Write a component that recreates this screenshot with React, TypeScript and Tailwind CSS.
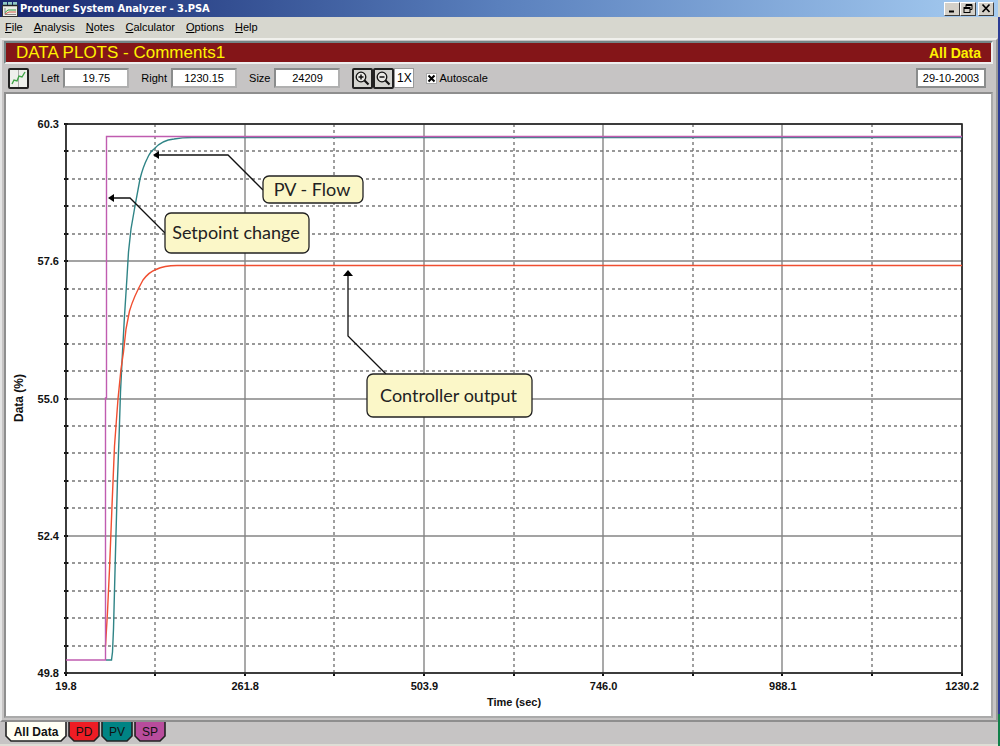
import type { ReactNode } from "react";

const PLOT = { left: 60, top: 30, width: 896, height: 549 };
const COLS = 10;
const ROWS = 20;

const menus = ["File", "Analysis", "Notes", "Calculator", "Options", "Help"];
const xLabels = ["19.8", "261.8", "503.9", "746.0", "988.1", "1230.2"];
const yLabels = ["60.3", "57.6", "55.0", "52.4", "49.8"];

const tabs = [
  { label: "All Data", fill: "#fffff4", className: "w-[62px] font-bold" },
  { label: "PD", fill: "#ee1c24", className: "w-8" },
  { label: "PV", fill: "#008484", className: "w-8" },
  { label: "SP", fill: "#b84c9c", className: "w-8" },
];

const curves = [
  {
    color: "#2f8486",
    d: "M40 536 H45.5 L46.5 528 L47.5 505 L49.5 428 L51.5 355 L53 315 L54.5 268 L56.5 228 L58.5 192 L61 153 L62.5 128 L65 105 L69 82 L74 55 Q77 43 81 35 Q84 28 88 25 Q96 16 108 15 Q116 13.5 126 13.5 H896",
  },
  {
    color: "#f04e30",
    d: "M39.5 522 L41.5 488 L43.5 445 L46 382 L48.5 322 L52 275 L55 245 L57.5 228 L60 205 L63.5 187 Q68 172 77 156 Q83 148 90 145.5 Q98 141.5 111 141.5 H896",
  },
  { color: "#c05cb0", d: "M0 536 H39.5 V274 H40.5 V12.5 H896" },
];

type FieldProps = { id: string; label: string; value: string };

const Field = ({ id, label, value }: FieldProps) => (
  <div className="flex items-center gap-1">
    <label htmlFor={id}>{label}</label>
    <input
      id={id}
      defaultValue={value}
      className="h-5 w-[66px] border-2 border-[#8a8c8c] border-r-[#b0b0b0] border-b-[#b0b0b0] bg-white text-center"
    />
  </div>
);

const ToolButton = ({
  label,
  children,
}: {
  label: string;
  children: ReactNode;
}) => (
  <button
    type="button"
    aria-label={label}
    className="flex size-[21px] items-center justify-center rounded-xs border-2 border-[#222] bg-[#d4d4d0]"
  >
    {children}
  </button>
);

const Magnifier = ({ plus }: { plus?: boolean }) => (
  <svg width="17" height="17" viewBox="0 0 17 17" fill="none" stroke="#111">
    <circle cx="7" cy="7" r="4.8" strokeWidth="1.3" fill="#e8e8e4" />
    <path d="M4.5 7 H9.5" strokeWidth="1.5" />
    {plus && <path d="M7 4.5 V9.5" strokeWidth="1.5" />}
    <path d="M10.5 10.5 L14.5 14.5" strokeWidth="2.2" />
  </svg>
);

const WindowButton = ({
  label,
  children,
}: {
  label: string;
  children: ReactNode;
}) => (
  <button
    type="button"
    aria-label={label}
    className="flex h-[14px] w-4 items-center justify-center border border-white border-r-[#404040] border-b-[#404040] bg-[#d4d0c8]"
  >
    <svg width="12" height="11" viewBox="0 0 12 11" fill="none" stroke="#000">
      {children}
    </svg>
  </button>
);

const TitleBar = () => (
  <header className="flex h-[17px] items-center bg-linear-to-r from-[#19266e] via-[#5a80bd] to-[#a6ccf1] pr-1 pl-[2px]">
    <svg width="16" height="16" viewBox="0 0 16 16" className="mr-[2px]">
      <rect x="0.5" y="4.5" width="15" height="11" fill="#eceee6" stroke="#333" />
      <path d="M1 2.5 H5 M6 2.5 H10 M11 2.5 H15" stroke="#8fc8c4" strokeWidth="3" />
      <path d="M1 4.5 H15" stroke="#222" strokeWidth="1.5" />
      <path d="M3 7 V13.5 H14" stroke="#888" fill="none" />
      <path d="M3 11.5 L6 9 H14" stroke="#36a044" fill="none" />
      <path d="M3 13 L7 11 H14" stroke="#d8604c" fill="none" />
    </svg>
    <h1 className="flex-1 pt-px font-['DejaVu_Sans_Condensed','DejaVu_Sans',sans-serif] text-[11px] leading-4 font-bold text-white">
      Protuner System Analyzer - 3.PSA
    </h1>
    <div className="flex">
      <WindowButton label="Minimize">
        <path d="M3 8.5 H8" strokeWidth="2" />
      </WindowButton>
      <WindowButton label="Restore">
        <path d="M4 4 V1.5 H10 V6.5 H8" />
        <path d="M4 2 H10" strokeWidth="2" />
        <rect x="2" y="4.5" width="6" height="5" />
        <path d="M2 5 H8" strokeWidth="2" />
      </WindowButton>
      <span className="w-[2px]" />
      <WindowButton label="Close">
        <path d="M2.5 1.5 L9.5 9 M9.5 1.5 L2.5 9" strokeWidth="1.7" />
      </WindowButton>
    </div>
  </header>
);

const Toolbar = () => (
  <div className="flex h-7 items-center gap-3 px-1 pr-[7px]">
    <ToolButton label="Plot">
      <svg width="17" height="17" viewBox="0 0 17 17" fill="none">
        <path d="M0 0 H17 V17 H0 Z" fill="#eef0ec" />
        <path d="M8.5 0 V17" stroke="#aaa" />
        <path d="M2 14 L4 10 L7 11 L9 6 L12 7 L15 2" stroke="#3fa548" strokeWidth="1.4" />
      </svg>
    </ToolButton>
    <Field id="left" label="Left" value="19.75" />
    <Field id="right" label="Right" value="1230.15" />
    <Field id="size" label="Size" value="24209" />
    <div className="flex items-center">
      <ToolButton label="Zoom in">
        <Magnifier plus />
      </ToolButton>
      <ToolButton label="Zoom out">
        <Magnifier />
      </ToolButton>
      <button
        type="button"
        className="size-5 border border-[#999] bg-white text-xs leading-none"
      >
        1X
      </button>
    </div>
    <label className="flex items-center gap-[2px]">
      <span className="grid size-[11px]">
        <input
          type="checkbox"
          defaultChecked
          className="peer col-start-1 row-start-1 appearance-none border border-[#aaa] bg-white"
        />
        <svg
          viewBox="0 0 11 11"
          className="pointer-events-none invisible col-start-1 row-start-1 size-[11px] peer-checked:visible"
        >
          <path d="M2.5 2.5 L8.5 8.5 M8.5 2.5 L2.5 8.5" stroke="#000" strokeWidth="2" />
        </svg>
      </span>
      Autoscale
    </label>
    <input
      aria-label="Date"
      defaultValue="29-10-2003"
      className="ml-auto h-5 w-[70px] border-2 border-[#8a8c8c] bg-white text-center"
    />
  </div>
);

const Grid = () => (
  <g fill="none">
    {Array.from({ length: COLS + 1 }, (_, i) => {
      const x = Math.floor((i * PLOT.width) / COLS);
      const major = i % 2 === 0;
      return (
        <g key={i}>
          <path
            d={`M${x} 0 V${PLOT.height}`}
            stroke={major ? "#858585" : "#777"}
            strokeWidth={major ? 1.4 : 1.4}
            strokeDasharray={major ? undefined : "3 3"}
          />
          <path d={`M${x} ${PLOT.height} v3`} stroke="#111" strokeWidth="2" />
        </g>
      );
    })}
    {Array.from({ length: ROWS + 1 }, (_, i) => {
      const y = Math.round((i * PLOT.height) / ROWS);
      const major = i % 5 === 0;
      return (
        <g key={i}>
          <path
            d={`M0 ${y} H${PLOT.width}`}
            stroke={major ? "#858585" : "#777"}
            strokeWidth="1.4"
            strokeDasharray={major ? undefined : "3 3"}
          />
          <path d={`M-2 ${y} h4`} stroke="#111" strokeWidth="2" />
        </g>
      );
    })}
    <rect width={PLOT.width} height={PLOT.height} stroke="#222" strokeWidth="1.6" />
  </g>
);

type CalloutProps = {
  x: number;
  y: number;
  width: number;
  height: number;
  leader: string;
  arrow: string;
  children: string;
};

const Callout = ({ x, y, width, height, leader, arrow, children }: CalloutProps) => (
  <g>
    <path d={leader} fill="none" stroke="#111" strokeWidth="1.3" />
    <path d={arrow} fill="#000" />
    <rect
      x={x}
      y={y}
      width={width}
      height={height}
      rx="6"
      fill="#fbf7c8"
      stroke="#222"
      strokeWidth="1.3"
    />
    <text
      x={x + width / 2 - 1}
      y={y + height / 2 + 6}
      textAnchor="middle"
      className="fill-[#222] font-['Lato','Open_Sans',sans-serif] text-[18px]"
    >
      {children}
    </text>
  </g>
);

const Chart = () => (
  <svg
    viewBox="0 0 985 622"
    className="block w-full"
    role="img"
    aria-label="Data against time"
  >
    <g transform={`translate(${PLOT.left} ${PLOT.top})`}>
      <Grid />
      {curves.map((curve) => (
        <path
          key={curve.color}
          d={curve.d}
          fill="none"
          stroke={curve.color}
          strokeWidth="1.4"
        />
      ))}
      <g className="text-[11px] font-bold" fill="#111">
        {yLabels.map((label, i) => (
          <text
            key={label}
            x="-7"
            y={(i * PLOT.height) / 4 + 4}
            textAnchor="end"
          >
            {label}
          </text>
        ))}
        {xLabels.map((label, i) => (
          <text
            key={label}
            x={(i * PLOT.width) / 5}
            y={PLOT.height + 17}
            textAnchor="middle"
          >
            {label}
          </text>
        ))}
        <text x={PLOT.width / 2} y={PLOT.height + 33} textAnchor="middle">
          Time (sec)
        </text>
        <text
          transform="translate(-43 274) rotate(-90)"
          textAnchor="middle"
          className="text-xs"
        >
          Data (%)
        </text>
      </g>
      <Callout
        x={197}
        y={52}
        width={100}
        height={27}
        leader="M93 31 H162 L197 66"
        arrow="M87 31 l6 -4 v8 z"
      >
        PV - Flow
      </Callout>
      <Callout
        x={99}
        y={89}
        width={144}
        height={40}
        leader="M46 74 H64 L99 109"
        arrow="M42 74 l6 -4 v8 z"
      >
        Setpoint change
      </Callout>
      <Callout
        x={301}
        y={250}
        width={165}
        height={43}
        leader="M282 150 V212 L320 250"
        arrow="M282 146 l-5 6 h10 z"
      >
        Controller output
      </Callout>
    </g>
  </svg>
);

const Tabs = () => (
  <nav className="flex gap-px pl-[5px]">
    {tabs.map(({ label, fill, className }) => (
      <button
        key={label}
        type="button"
        className={`relative h-5 text-xs text-[#111] ${className}`}
      >
        <svg
          className="absolute inset-0 size-full"
          viewBox={label === "All Data" ? "0 0 62 20" : "0 0 32 20"}
        >
          <path
            d={
              label === "All Data"
                ? "M1 0 V14 L6 19 H56 L61 14 V0"
                : "M1 0 V14 L6 19 H26 L31 14 V0"
            }
            fill={fill}
            stroke="#222"
            strokeWidth="1.6"
          />
        </svg>
        <span className="relative">{label}</span>
      </button>
    ))}
  </nav>
);

const App = () => {
  return (
    <div className="flex min-h-screen font-['Liberation_Sans',Arial,sans-serif] text-[11px] text-black">
      <main className="flex min-w-0 flex-1 flex-col bg-[#c6c4c4]">
        <TitleBar />
        <nav className="flex h-[21px] items-center gap-[11px] bg-[#d7d7cf] px-[5px]">
          {menus.map((name) => (
            <button key={name} type="button">
              <span className="underline">{name[0]}</span>
              {name.slice(1)}
            </button>
          ))}
        </nav>
        <div className="border-2 border-t-[#f0f0ec] border-r-[#999] border-b-[#8e8e8e] border-l-[#e4e4e4] pt-px pr-[3px] pb-[2px] pl-[2px]">
          <div className="flex h-[23px] items-center justify-between border-2 border-[#758586] border-r-[#eee] border-b-[#eee] bg-[#841518] px-[10px] text-[#fff200]">
            <h2 className="text-[17px] leading-5">DATA PLOTS - Comments1</h2>
            <p className="text-sm font-bold">All Data</p>
          </div>
          <Toolbar />
          <section className="border-2 border-[#8e8e8e] border-r-[#aaa] border-b-[#aaa] bg-white">
            <Chart />
          </section>
        </div>
        <Tabs />
        <div className="mt-auto h-[2px] bg-[#deded6]" />
      </main>
      <div className="flex w-[2px] flex-col bg-[#2c3c94]">
        <div className="h-[17px] bg-[#d7d7cf]" />
        <div className="mt-auto h-8 bg-[#12804a]" />
      </div>
    </div>
  );
};

export default App;
